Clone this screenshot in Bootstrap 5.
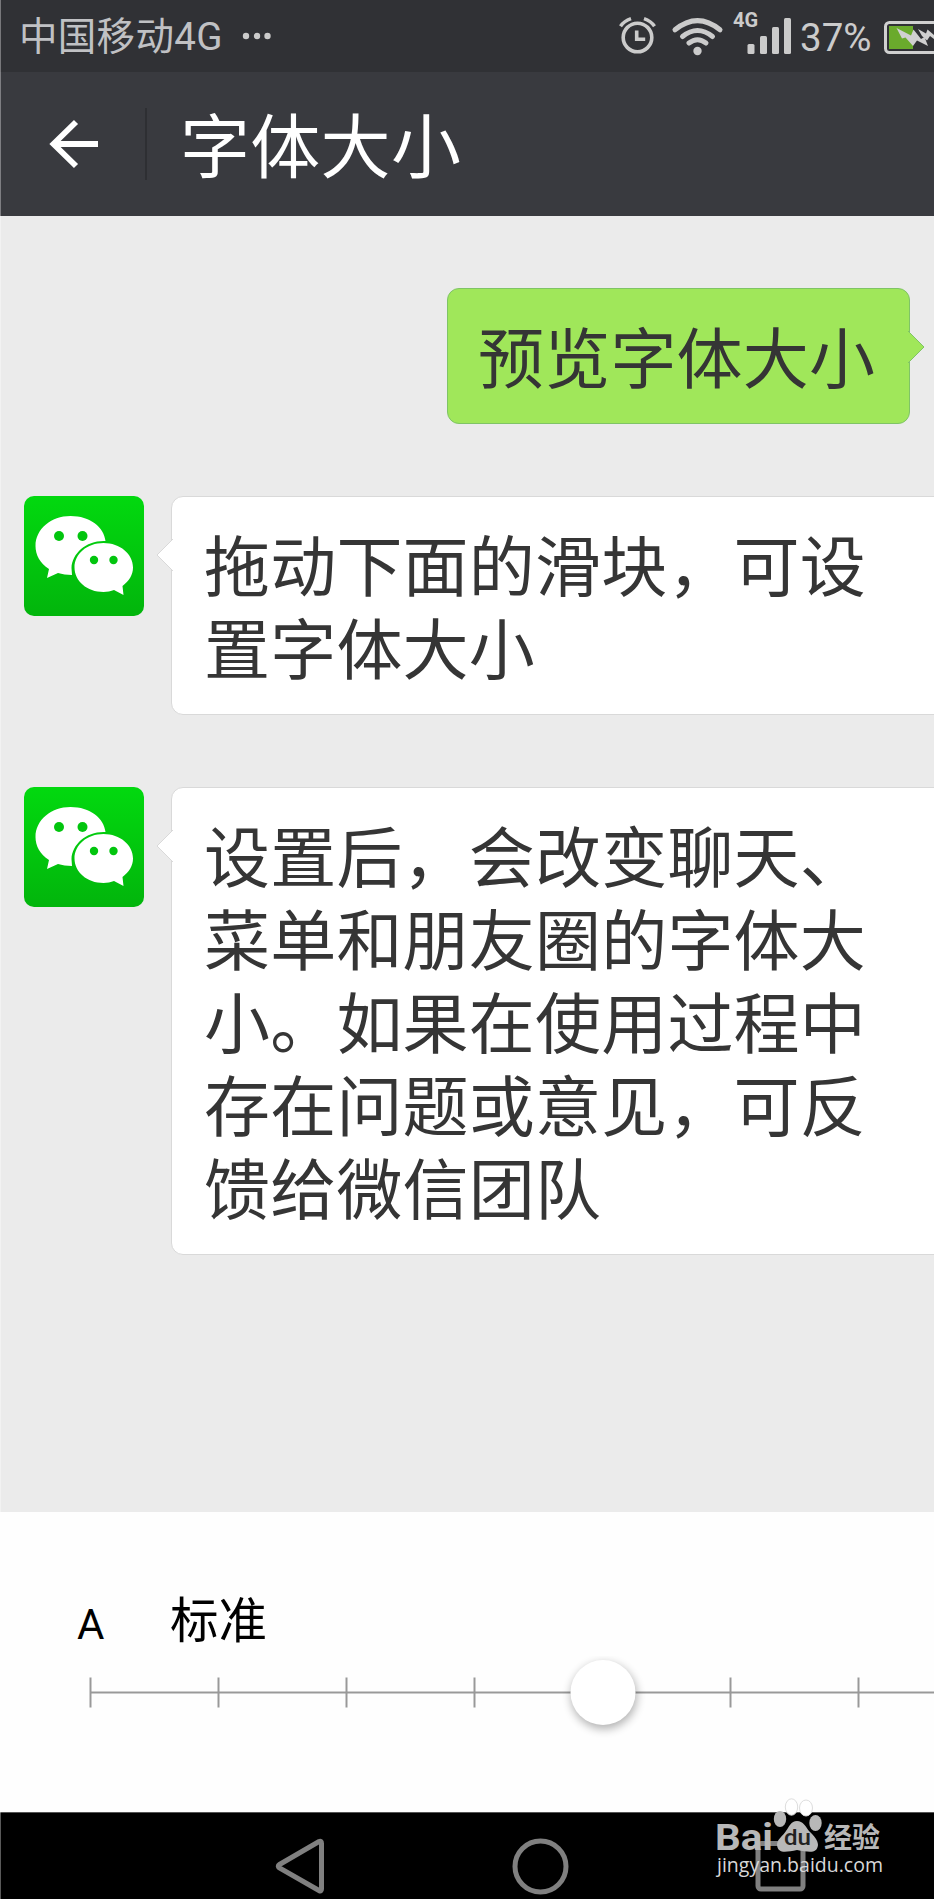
<!DOCTYPE html>
<html lang="zh-CN">
<head>
<meta charset="utf-8">
<meta name="viewport" content="width=device-width, initial-scale=1">
<title>字体大小</title>
<link href="https://cdn.jsdelivr.net/npm/bootstrap@5.3.0/dist/css/bootstrap.min.css" rel="stylesheet">
<style>
  body { font-family: Roboto, "Noto Sans CJK SC", sans-serif; color: #353535; background: #fff; }
  .screen { height: 1899px; }
  .edge { top: 0; left: 0; width: 1px; height: 100%; background: rgba(255,255,255,.35); z-index: 5; }
  .status-bar { height: 72px; background: #303135; color: #c0c1c4; padding-left: 19px; font-size: 38.5px; line-height: 74px; }
  .status-bar svg { display: block; }
  .carrier { letter-spacing: .3px; padding-top: 2px; }
  .status-right { width: 334px; color: #cbcbcb; }
  .percent { padding-top: 1px; }
  .title-bar { height: 144px; background: #393a3f; }
  .back-cell { width: 147px; height: 72px; border-right: 2px solid #2e2f33; padding-left: 48px; }
  .title-text { font-size: 70px; line-height: 80px; letter-spacing: .3px; padding: 9px 0 0 33px; color: #fff; font-weight: 400; }
  .chat { height: 1296px; background: #ebebeb; padding-top: 72px; padding-left: 24px; gap: 72px; }
  .bubble { position: relative; font-size: 66px; line-height: 83px; letter-spacing: .2px; border: 1px solid #d9d9d9; border-radius: 12px; background: #fff; padding: 30px 32px 21px; }
  .bubble p { width: 680px; }
  .bubble-in { width: 800px; margin-left: 27px; }
  .bubble-out { background: #a0e75a; border-color: #7fc466; margin-right: 24px; width: 463px; padding-left: 30px; padding-right: 30px; }
  .bubble-out p { width: 400px; }
  .tail { position: absolute; width: 17px; height: 32px; top: 42px; overflow: visible; }
  .bubble-in .tail { left: -16px; }
  .bubble-out .tail { right: -16px; }
  .avatar { width: 120px; height: 120px; }
  .size-panel { height: 300px; background: #fefefe; color: #000; padding-top: 74px; }
  .size-labels { height: 70px; padding-left: 77px; }
  .small-a { font-size: 42px; width: 93px; line-height: 70px; padding-top: 4px; }
  .standard { font-size: 48.500px; line-height: 71px; }
  .slider { display: block; }
  .nav-keys { height: 87px; background: #000; border-top: 1px solid #555; }
  .watermark { right: 43px; bottom: 15px; width: 180px; height: 92px; overflow: visible; }
</style>
</head>
<body>
<main class="screen position-relative overflow-hidden d-flex flex-column">
  <div class="edge position-absolute"></div>

  <div class="status-bar d-flex justify-content-between flex-shrink-0">
    <div class="d-flex align-items-center">
      <span class="carrier">中国移动4G</span>
      <svg class="ms-3" width="40" height="12" viewBox="0 0 40 12" fill="#cbcbcb"><circle cx="7" cy="6" r="3.2"/><circle cx="18" cy="6" r="3.2"/><circle cx="28.5" cy="6" r="3.2"/></svg>
    </div>
    <div class="status-right d-flex flex-shrink-0 overflow-hidden">
      <svg width="200" height="72" viewBox="0 0 200 72" class="flex-shrink-0" fill="none" stroke="#cbcbcb">
        <circle cx="37.5" cy="37.5" r="14.3" stroke-width="3.6"/>
        <path d="M36.7 30.5v8.7h8.5" stroke-width="3.6"/>
        <path d="M20.500 26.300Q24 21 31 18.600M54.500 26.300Q51 21 44 18.600" stroke-width="3.5"/>
        <g stroke-width="5" stroke-linecap="round"><path d="M75 29.800Q97.500 11.500 120 29.800M82.500 36.500Q97.500 24.500 112.500 36.500M89 43Q97.500 36.500 106 43"/></g>
        <circle cx="97.500" cy="51" r="4.200" fill="#cbcbcb" stroke="none"/>
        <text x="133" y="26.500" font-size="20" font-weight="700" fill="#cbcbcb" stroke="none" font-family="Roboto, sans-serif">4G</text>
        <g fill="#cbcbcb" stroke="none"><rect x="147.500" y="44" width="7" height="10" rx="1.500"/><rect x="160" y="36" width="7" height="18" rx="1.500"/><rect x="172" y="27" width="7" height="27" rx="1.500"/><rect x="184" y="18" width="7" height="36" rx="1.500"/></g>
      </svg>
      <span class="percent">37%</span>
      <svg width="56" height="72" viewBox="278 0 56 72" class="flex-shrink-0 ms-auto">
        <rect x="285.500" y="22.500" width="70" height="30" rx="4" fill="none" stroke="#d0d0d0" stroke-width="3"/>
        <rect x="289" y="26" width="24" height="23" fill="#6aaa2c"/>
        <path d="M296.500 28L311 35.500L313.500 29.500L321 39L324.500 37L328 46L317 40.500L313 46L305.500 37.500L302 38.500Z" fill="#d0d0d0"/>
        <path d="M318 29L326 33.500L327.500 29.500L334 35V39L330 36L327 40.500L322 36Z" fill="#d0d0d0"/>
      </svg>
    </div>
  </div>

  <header class="title-bar d-flex align-items-center flex-shrink-0">
    <div class="back-cell d-flex align-items-center">
      <svg width="52" height="50" viewBox="0 0 52 50" fill="none" stroke="#fff" stroke-width="5.800"><path d="M50 25H6M28 3L5.500 25L28 47"/></svg>
    </div>
    <h1 class="title-text mb-0">字体大小</h1>
  </header>

  <section class="chat d-flex flex-column align-items-start flex-shrink-0">
    <div class="bubble bubble-out align-self-end">
      <p class="mb-0">预览字体大小</p>
      <svg class="tail" viewBox="0 0 17 32"><path d="M0 0L16 16L0 32" fill="#a0e75a" stroke="#7fc466"/></svg>
    </div>

    <div class="d-flex align-items-start">
      <svg class="avatar flex-shrink-0" viewBox="0 0 120 120">
        <defs>
          <linearGradient id="wx" x1="0" y1="0" x2="0" y2="1"><stop offset="0" stop-color="#02d90f"/><stop offset="1" stop-color="#02b50c"/></linearGradient>
          <g id="talk">
            <path fill="#fff" d="M46.500 20C66 20 80 31 81.500 45C63 44 48 57 47.500 72L48 79C43 79 38 78 34 77L23 82L25 73C16 67 11.500 59 11.500 50C11.500 33 27 20 46.500 20Z"/>
            <path fill="#fff" d="M79.500 47C96 47 109 58 109 71.500C109 79 105 85 98.500 90L99.500 99L90 94C87 95 83 96 79.500 96C63 96 50.500 85 50.500 71.500C50.500 58 63 47 79.500 47Z"/>
            <g fill="#02c50e"><circle cx="35" cy="40" r="5"/><circle cx="58.500" cy="40" r="5"/><circle cx="70" cy="64" r="4.200"/><circle cx="89.500" cy="64" r="4.200"/></g>
          </g>
        </defs>
        <rect width="120" height="120" rx="10" fill="url(#wx)"/><use href="#talk"/>
      </svg>
      <div class="bubble bubble-in flex-shrink-0">
        <svg class="tail" viewBox="0 0 17 32"><path d="M17 0L1 16L17 32" fill="#fff" stroke="#d9d9d9"/></svg>
        <p class="mb-0">拖动下面的滑块，可设<br>置字体大小</p>
      </div>
    </div>

    <div class="d-flex align-items-start">
      <svg class="avatar flex-shrink-0" viewBox="0 0 120 120"><rect width="120" height="120" rx="10" fill="url(#wx)"/><use href="#talk"/></svg>
      <div class="bubble bubble-in flex-shrink-0">
        <svg class="tail" viewBox="0 0 17 32"><path d="M17 0L1 16L17 32" fill="#fff" stroke="#d9d9d9"/></svg>
        <p class="mb-0">设置后，会改变聊天、<br>菜单和朋友圈的字体大<br>小。如果在使用过程中<br>存在问题或意见，可反<br>馈给微信团队</p>
      </div>
    </div>
  </section>

  <section class="size-panel flex-shrink-0">
    <div class="size-labels d-flex">
      <span class="small-a">A</span>
      <span class="standard">标准</span>
    </div>
    <svg class="slider" width="934" height="90" viewBox="0 0 934 90">
      <defs><filter id="soft" x="-50%" y="-50%" width="200%" height="200%"><feGaussianBlur stdDeviation="5"/></filter></defs>
      <path d="M90 36.500H934M90.500 21.500v30M218.500 21.500v30M346.500 21.500v30M474.500 21.500v30M730.500 21.500v30M858.500 21.500v30" fill="none" stroke="#999" stroke-width="2"/>
      <circle cx="604" cy="40" r="33" fill="#000" opacity=".3" filter="url(#soft)"/>
      <circle cx="603" cy="36.500" r="32.500" fill="#fff"/>
    </svg>
  </section>

  <nav class="nav-keys flex-shrink-0">
    <svg class="d-block" width="934" height="86" viewBox="0 1813 934 86" fill="none" stroke="#808080" stroke-width="5">
      <path d="M279.500 1864.500L319 1841.500Q321.500 1840.500 321.500 1843.500V1889Q321.500 1892 319 1890.500L279.500 1868Q277 1866 279.500 1864.500Z"/>
      <circle cx="540.500" cy="1866.500" r="25.500"/>
      <rect x="758" y="1843.500" width="45" height="45.500" rx="3"/>
    </svg>
  </nav>

  <svg class="watermark position-absolute" viewBox="710 1791 180 92">
    <g fill="#b8b8b8">
      <ellipse cx="790.500" cy="1806" rx="6.200" ry="8.200" fill="#fff" stroke="#ddd"/>
      <ellipse cx="805" cy="1807" rx="6.500" ry="8" fill="#fff" stroke="#ddd"/>
      <ellipse cx="779" cy="1818" rx="6.200" ry="8"/>
      <ellipse cx="814.500" cy="1822" rx="6.200" ry="8"/>
      <path d="M796 1820C802 1820 805 1826 808 1830C813 1835 817 1839 817 1844C816 1853 808 1851 796 1849C785 1851 777 1853 776 1844C776 1838 782 1835 785 1830C788 1826 790 1820 796 1820Z"/>
    </g>
    <g font-family="Roboto, sans-serif" font-weight="700" fill="#b8b8b8">
      <text x="714" y="1849" font-size="37" textLength="58" lengthAdjust="spacingAndGlyphs">Bai</text>
      <text x="783" y="1844" font-size="22" textLength="27" lengthAdjust="spacingAndGlyphs" font-weight="500" fill="#222">du</text>
      <text x="823" y="1846.500" font-size="28" textLength="56" font-family="Noto Sans CJK SC, sans-serif">经验</text>
    </g>
    <text x="716" y="1871" font-size="20" textLength="166" lengthAdjust="spacingAndGlyphs" font-family="Open Sans, sans-serif" fill="#d8d8d8">jingyan.baidu.com</text>
  </svg>
</main>
<script src="https://cdn.jsdelivr.net/npm/bootstrap@5.3.0/dist/js/bootstrap.bundle.min.js"></script>
</body>
</html>
